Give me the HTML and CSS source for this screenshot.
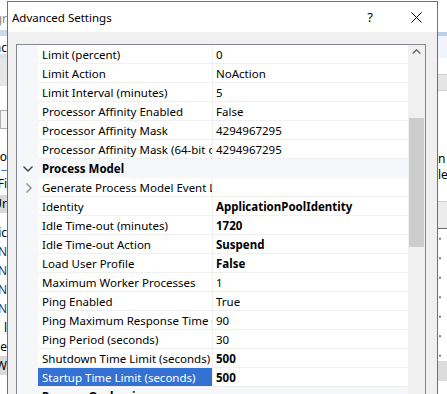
FILE: index.html
```html
<!DOCTYPE html>
<html>
<head>
<meta charset="utf-8">
<title>Advanced Settings</title>
<link rel="stylesheet" href="styles.css">
</head>
<body>
<div class="screen">
  <div class="bg bg-left">
    <div class="b" style="height:11px"></div>
    <div class="b t gray" style="height:16px">Pool Mgr</div>
    <div class="b" style="height:3px"></div>
    <div class="b band" style="height:6px"></div>
    <div class="b" style="height:6px"></div>
    <div class="b t" style="height:12px">Conc</div>
    <div class="b band2" style="height:4px"></div>
    <div class="b shade" style="height:28px"></div>
    <div class="b" style="height:24px"></div>
    <div class="b boxed" style="height:19px"></div>
    <div class="b" style="height:20px"></div>
    <div class="b t" style="height:15px">Demo</div>
    <div class="b t blue" style="height:12px">–</div>
    <div class="b t" style="height:15px">Fi</div>
    <div class="b" style="height:4px"></div>
    <div class="b t shade2" style="height:18px">Ur</div>
    <div class="b" style="height:10px"></div>
    <div class="b t" style="height:19px">ic</div>
    <div class="b t navy" style="height:19px">N</div>
    <div class="b t navy" style="height:19px">N</div>
    <div class="b t navy" style="height:19px">N</div>
    <div class="b t navy" style="height:19px">N</div>
    <div class="b t" style="height:19px">l</div>
    <div class="b t" style="height:19px">e</div>
    <div class="b t shade2" style="height:19px">W</div>
  </div>

  <div class="dialog">
    <div class="titlebar">
      <span class="title">Advanced Settings</span>
      <span class="help">?</span>
      <svg class="close" width="11" height="11" viewBox="0 0 11 11"><path d="M0.5 0.5L10.5 10.5M10.5 0.5L0.5 10.5" stroke="#000" stroke-width="1" fill="none"/></svg>
    </div>
    <div class="body">
      <div class="grid">
        <div class="rows">
          <div class="row"><div class="gut"></div><div class="name">Limit (percent)</div><div class="val">0</div></div>
          <div class="row"><div class="gut"></div><div class="name">Limit Action</div><div class="val">NoAction</div></div>
          <div class="row"><div class="gut"></div><div class="name">Limit Interval (minutes)</div><div class="val">5</div></div>
          <div class="row"><div class="gut"></div><div class="name">Processor Affinity Enabled</div><div class="val">False</div></div>
          <div class="row"><div class="gut"></div><div class="name">Processor Affinity Mask</div><div class="val">4294967295</div></div>
          <div class="row"><div class="gut"></div><div class="name">Processor Affinity Mask (64-bit option)</div><div class="val">4294967295</div></div>
          <div class="row cat">
            <div class="gut"><svg width="10" height="6" viewBox="0 0 10 6"><path d="M0.5 0.5L5 5L9.5 0.5" stroke="#404040" stroke-width="1.4" fill="none"/></svg></div>
            <div class="catname">Process Model</div>
          </div>
          <div class="row"><div class="gut"><svg class="exp" width="6" height="10" viewBox="0 0 6 10"><path d="M0.5 0.5L5 5L0.5 9.5" stroke="#8a8a8a" stroke-width="1.4" fill="none"/></svg></div><div class="name">Generate Process Model Event Log Entry</div><div class="val"></div></div>
          <div class="row"><div class="gut"></div><div class="name">Identity</div><div class="val bold">ApplicationPoolIdentity</div></div>
          <div class="row"><div class="gut"></div><div class="name">Idle Time-out (minutes)</div><div class="val bold">1720</div></div>
          <div class="row"><div class="gut"></div><div class="name">Idle Time-out Action</div><div class="val bold">Suspend</div></div>
          <div class="row"><div class="gut"></div><div class="name">Load User Profile</div><div class="val bold">False</div></div>
          <div class="row"><div class="gut"></div><div class="name">Maximum Worker Processes</div><div class="val">1</div></div>
          <div class="row"><div class="gut"></div><div class="name">Ping Enabled</div><div class="val">True</div></div>
          <div class="row"><div class="gut"></div><div class="name">Ping Maximum Response Time (seconds)</div><div class="val">90</div></div>
          <div class="row"><div class="gut"></div><div class="name">Ping Period (seconds)</div><div class="val">30</div></div>
          <div class="row"><div class="gut"></div><div class="name">Shutdown Time Limit (seconds)</div><div class="val bold">500</div></div>
          <div class="row"><div class="gut"></div><div class="name sel">Startup Time Limit (seconds)</div><div class="val bold">500</div></div>
          <div class="row cat">
            <div class="gut"></div>
            <div class="catname">Process Orphaning</div>
          </div>
        </div>
        <div class="scroll">
          <svg class="up" width="9" height="5" viewBox="0 0 9 5"><path d="M0.7 4.5L4.5 0.8L8.3 4.5" stroke="#606060" stroke-width="1.3" fill="none"/></svg>
          <div class="thumb"></div>
        </div>
      </div>
    </div>
  </div>

  <div class="bg bg-right">
    <div class="r" style="height:32px"></div>
    <div class="r bandline" style="height:4px"></div>
    <div class="r pale" style="height:22px"></div>
    <div class="r" style="height:16px"></div>
    <div class="r btn" style="height:17px"></div>
    <div class="r" style="height:60px"></div>
    <div class="r t" style="height:16px">n</div>
    <div class="r t" style="height:16px">le</div>
    <div class="r" style="height:18px"></div>
    <div class="r btn2" style="height:28px"></div>
    <div class="r dotcol" style="height:132px"></div>
    <div class="r shade3" style="height:20px"></div>
  </div>
</div>
</body>
</html>
```
FILE: styles.css
```css
* { box-sizing: border-box; margin: 0; padding: 0; }
html, body { width: 447px; height: 394px; overflow: hidden; background: #fff; }
body { font-family: "Noto Sans", "Liberation Sans", sans-serif; font-size: 11.5px; color: #000; }

.screen { display: flex; height: 394px; }

/* background windows */
.bg { flex: none; overflow: hidden; display: flex; flex-direction: column; background: #fff; }
.bg-left { width: 7px; }
.bg-right { width: 10px; }
.b, .r { flex: none; display: flex; justify-content: flex-end; align-items: center; white-space: nowrap; overflow: hidden; line-height: 14px; }
.r { justify-content: flex-start; }
.t { font-size: 12px; }
.gray { color: #8a8a8a; }
.blue { color: #3b74c9; }
.navy { color: #1b3a77; }
.band { background: #cdd9ea; }
.band2 { background: #d7e2f1; }
.shade { background: #e6e6e6; }
.shade2 { background: #dadada; }
.boxed { border: 1px solid #adadad; border-right: none; background: #f4f4f4; }
.bandline { background: #bccfe8; }
.pale { background: #f1f5fb; }
.btn { background: #e5e5e5; border-top: 1px solid #cfcfcf; border-bottom: 1px solid #cfcfcf; }
.btn2 { background: #ececec; border-top: 1px solid #d0d0d0; border-bottom: 1px solid #6a6a6a; }
.dotcol { background-image: radial-gradient(circle, #6a7f9f 0.8px, transparent 1.1px); background-size: 10px 19.5px; background-position: -3px 0; }
.shade3 { background: #dcdcdc; }

/* dialog */
.dialog {
  width: 431px; flex: none; height: 393px; margin-top: 1px;
  border: 1px solid #707070; border-bottom: none;
  background: #f0f0f0; display: flex; flex-direction: column; overflow: hidden;
}
.titlebar { height: 30px; flex: none; background: #fff; display: flex; align-items: center; padding-left: 4px; }
.title { flex: 1; font-size: 11.5px; color: #000; padding-top: 1px; }
.help { width: 12px; text-align: center; font-size: 13px; margin-right: 35px; color: #000; }
.close { margin-right: 15px; display: block; }

.body { flex: 1; padding: 12px 0 0 8px; }
.grid { width: 410px; border: 1px solid #828790; border-bottom: none; background: #fff; display: flex; height: 400px; }
.rows { width: 391px; flex: none; display: flex; flex-direction: column; }
.row { display: flex; height: 19px; flex: none; }
.gut { width: 21px; flex: none; background: #f5f7fb; display: flex; align-items: center; justify-content: center; }
.name {
  width: 175px; flex: none; padding-left: 4px; padding-top: 1px; line-height: 18px;
  border-right: 1px solid #f0f0f0; border-bottom: 1px solid #f0f0f0;
  white-space: nowrap; overflow: hidden;
}
.val { flex: 1; padding-left: 3px; padding-top: 1px; line-height: 18px; border-bottom: 1px solid #f0f0f0; white-space: nowrap; overflow: hidden; }
.bold { font-weight: bold; }
.sel { background: #3372d3; color: #fff; }
.cat { background: #f5f7fb; }
.catname { flex: 1; padding-left: 4px; padding-top: 1px; font-weight: bold; line-height: 18px; }
.exp { margin-left: 2px; }

.scroll { width: 17px; flex: none; background: #f0f0f0; display: flex; flex-direction: column; align-items: center; }
.up { margin-top: 4px; display: block; }
.thumb { width: 15px; height: 129px; margin-top: 64px; background: #cdcdcd; }
```
